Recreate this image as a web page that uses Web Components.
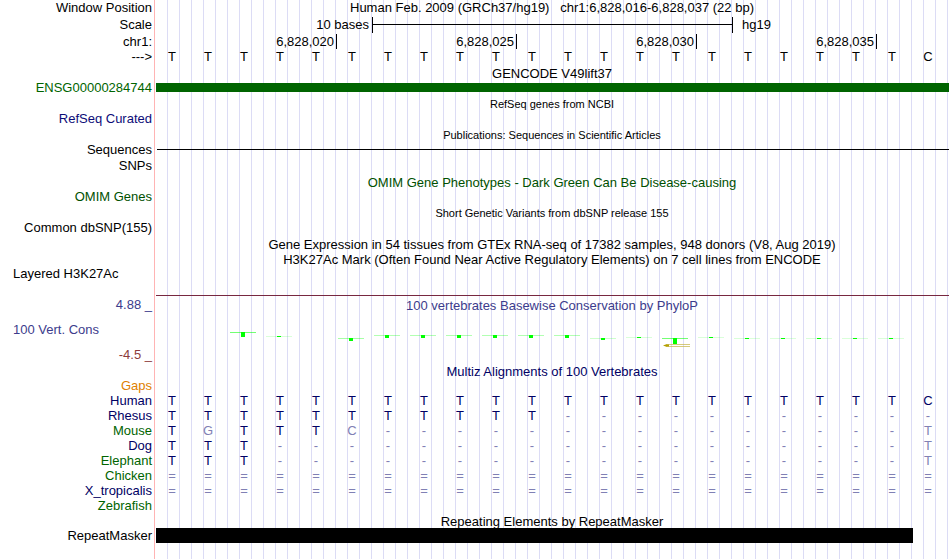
<!DOCTYPE html>
<html lang="en">
<head>
<meta charset="utf-8">
<title>Genome Browser</title>
<style>
  html, body { margin: 0; background: #fff; }
  body { font: 13px/15px "Liberation Sans", Arial, sans-serif; color: #000; }
</style>
</head>
<body>
<genome-image></genome-image>
<script>
const sheet = css => `<style>*{box-sizing:border-box}${css}</style>`;
const define = (name, render) => customElements.define(name, class extends HTMLElement {
  connectedCallback() {
    if (this.shadowRoot) return;
    this.attachShadow({ mode: 'open' }).innerHTML = render(this);
  }
});

/* One row: a right-aligned label, then the track's data */
define('track-row', el => sheet(`
  :host { display: grid; grid-template-columns: 154px minmax(0, 1fr); min-height: 16px; }
  :host([tight]) { min-height: 15px; }
  .label { text-align: right; padding-right: 2px; white-space: nowrap; color: var(--label, #000); }
  :host([left]) .label { text-align: left; padding-left: 13px; }
`) + `<div class="label">${(el.getAttribute('label') || '').replace('>', '&gt;')}</div><slot></slot>`);

/* Centred caption over a track */
define('track-title', el => sheet(`
  :host { display: block; height: 15px; line-height: 17px; padding: 0 2px 0 156px; text-align: center; white-space: pre; }
  :host([small]) { font-size: 11px; }
  :host([inline]) { padding-left: 2px; line-height: 15px; }
`) + `<slot></slot>`);

/* One letter per base */
define('base-letters', el => sheet(`
  :host { display: grid; grid-template-columns: repeat(22, minmax(0, 1fr)); margin-right: 4px; text-align: center; }
  .dim { color: #8080b4; }
`) + [...el.getAttribute('seq')].map((c, i) =>
  `<span class="${c === '-' || c === '=' || (el.hasAttribute('diff') && c !== (i < 21 ? 'T' : 'C')) ? 'dim' : ''}">${c}</span>`).join(''));

/* Solid feature bar */
define('feature-bar', el => sheet(`
  :host { display: block; margin: var(--bar-margin, 3px 1px 0 2px); height: var(--bar-height, 9px); background: var(--bar, #000); }
`));

define('scale-bar', el => sheet(`
  :host { display: grid; grid-template-columns: 215fr 364fr 217fr; height: 17px; }
  .from { text-align: right; }
  .bar { height: 16px; margin-left: 3px; border: solid #000; border-width: 0 1px; background: linear-gradient(#000, #000) 0 7px / 100% 1px no-repeat; }
  .to { padding-left: 9px; }
`) + `<span class="from">10 bases</span><div class="bar"></div><span class="to">hg19</span>`);

define('position-ruler', el => sheet(`
  :host { display: grid; grid-template-columns: 183fr 180fr 180fr 180fr 73fr; height: 15px; text-align: right; }
  span { border-right: 1px solid #000; padding-right: 2px; }
`) + ['6,828,020', '6,828,025', '6,828,030', '6,828,035'].map(t => `<span>${t}</span>`).join(''));

/* Conservation scores: [line position, block height, line opacity] per base */
define('wiggle-plot', el => {
  const near = [335, 3, .3], flat = [338, 1, .15];
  const data = [0, 0, [332, 5, .55], [336, 1, .15], 0, [338, 3, .35], near, near, near, near, near, near,
    [338, 2, .2], [337, 1, .15], [338, 6, .55], [337, 1, .15], flat, flat, flat, flat, flat, 0];
  return sheet(`
    :host { display: grid; grid-template-columns: repeat(22, minmax(0, 1fr)); margin-right: 4px; height: 20px; }
    svg { display: block; margin-left: 4px; overflow: visible; }
  `) + data.map((d, i) => d ? `<svg width="29" height="20" shape-rendering="crispEdges">
    <rect x="0" y="${d[0] - 330}" width="26" height="1" fill="#0f0" fill-opacity="${d[2]}"/>
    <rect x="11" y="${d[0] - 330}" width="4" height="${d[1]}" fill="#0f0"/>
    ${i === 14 ? '<g shape-rendering="auto"><path d="M1 15.5L5 14h2v3H5z" fill="#b4a000"/><path d="M5 14.5h23M5 16.5h23" stroke="#c8b850" stroke-opacity=".75"/></g>' : ''}
  </svg>` : '<span></span>').join('');
});

define('conservation-track', el => sheet(`
  :host { display: grid; grid-template-columns: 154px minmax(0, 1fr); height: 67px; color: #3c3c8c; }
  .labels { display: flex; flex-direction: column; gap: 10px; padding: 1px 2px 0 13px; text-align: right; }
  .name { text-align: left; }
  .min { color: #8c3c3c; }
  .plot { padding-top: 2px; }
  wiggle-plot { margin-top: 17px; }
`) + `<div class="labels"><span>4.88 _</span><span class="name">100 Vert. Cons</span><span class="min">-4.5 _</span></div>
  <div class="plot"><track-title inline>100 vertebrates Basewise Conservation by PhyloP</track-title><wiggle-plot></wiggle-plot></div>`);

define('genome-image', el => {
  const T = n => 'T'.repeat(n), D = n => '-'.repeat(n);
  const species = [
    ['Human', T(21) + 'C', 'n'], ['Rhesus', T(11) + D(11), 'n'], ['Mouse', 'TGTTTC' + D(15) + 'T', 'g'],
    ['Dog', T(3) + D(18) + 'T', 'n'], ['Elephant', T(3) + D(18) + 'T', 'g'],
    ['Chicken', '='.repeat(22), 'g'], ['X_tropicalis', '='.repeat(22), 'n'], ['Zebrafish', '', 'g']];
  return sheet(`
    :host { display: block; min-height: 100vh; padding-bottom: 16px;
      background:
        linear-gradient(#ffb4b4, #ffb4b4) 154px 0 / 1px 100% no-repeat,
        repeating-linear-gradient(90deg, transparent 0 11px, #dcdcf5 11px 12px) 156px 0 no-repeat; }
    .n { --label: #000064; color: #000064; }
    .g { --label: #006400; color: #000064; }
    .first { min-height: 17px; }
    .gene { --label: #006400; --bar: #006400; }
    .refseq { --label: #0c0c78; }
    .omim { --label: #005000; }
    .green { color: #005000; }
    .gaps { --label: #e08000; }
    .thin { --bar-height: 1px; --bar-margin: 7px 1px 0 3px; }
    .limit { --bar: #782840; --bar-height: 1px; --bar-margin: 13px 1px 0 156px; }
    .multiz { color: #000064; }
    .repeat { --bar-height: 15px; --bar-margin: 0 37px 0 2px; }
  `) + `
  <track-row class="first" label="Window Position"><track-title inline>Human Feb. 2009 (GRCh37/hg19)   chr1:6,828,016-6,828,037 (22 bp)</track-title></track-row>
  <track-row label="Scale"><scale-bar></scale-bar></track-row>
  <track-row tight label="chr1:"><position-ruler></position-ruler></track-row>
  <track-row label="--->"><base-letters seq="${T(21)}C"></base-letters></track-row>
  <track-title>GENCODE V49lift37</track-title>
  <track-row class="gene" label="ENSG00000284744"><feature-bar></feature-bar></track-row>
  <track-title small>RefSeq genes from NCBI</track-title>
  <track-row class="refseq" label="RefSeq Curated"></track-row>
  <track-title small>Publications: Sequences in Scientific Articles</track-title>
  <track-row class="thin" label="Sequences"><feature-bar></feature-bar></track-row>
  <track-row label="SNPs"></track-row>
  <track-title class="green">OMIM Gene Phenotypes - Dark Green Can Be Disease-causing</track-title>
  <track-row class="omim" label="OMIM Genes"></track-row>
  <track-title small>Short Genetic Variants from dbSNP release 155</track-title>
  <track-row label="Common dbSNP(155)"></track-row>
  <track-title>Gene Expression in 54 tissues from GTEx RNA-seq of 17382 samples, 948 donors (V8, Aug 2019)</track-title>
  <track-title>H3K27Ac Mark (Often Found Near Active Regulatory Elements) on 7 cell lines from ENCODE</track-title>
  <track-row left label="Layered H3K27Ac"></track-row>
  <feature-bar class="limit"></feature-bar>
  <conservation-track></conservation-track>
  <track-title class="multiz">Multiz Alignments of 100 Vertebrates</track-title>
  <track-row tight class="gaps" label="Gaps"></track-row>
  ${species.map(([name, seq, c]) => `<track-row tight class="${c}" label="${name}"><base-letters diff seq="${seq}"></base-letters></track-row>`).join('')}
  <track-title>Repeating Elements by RepeatMasker</track-title>
  <track-row tight class="repeat" label="RepeatMasker"><feature-bar></feature-bar></track-row>`;
});
</script>
</body>
</html>
